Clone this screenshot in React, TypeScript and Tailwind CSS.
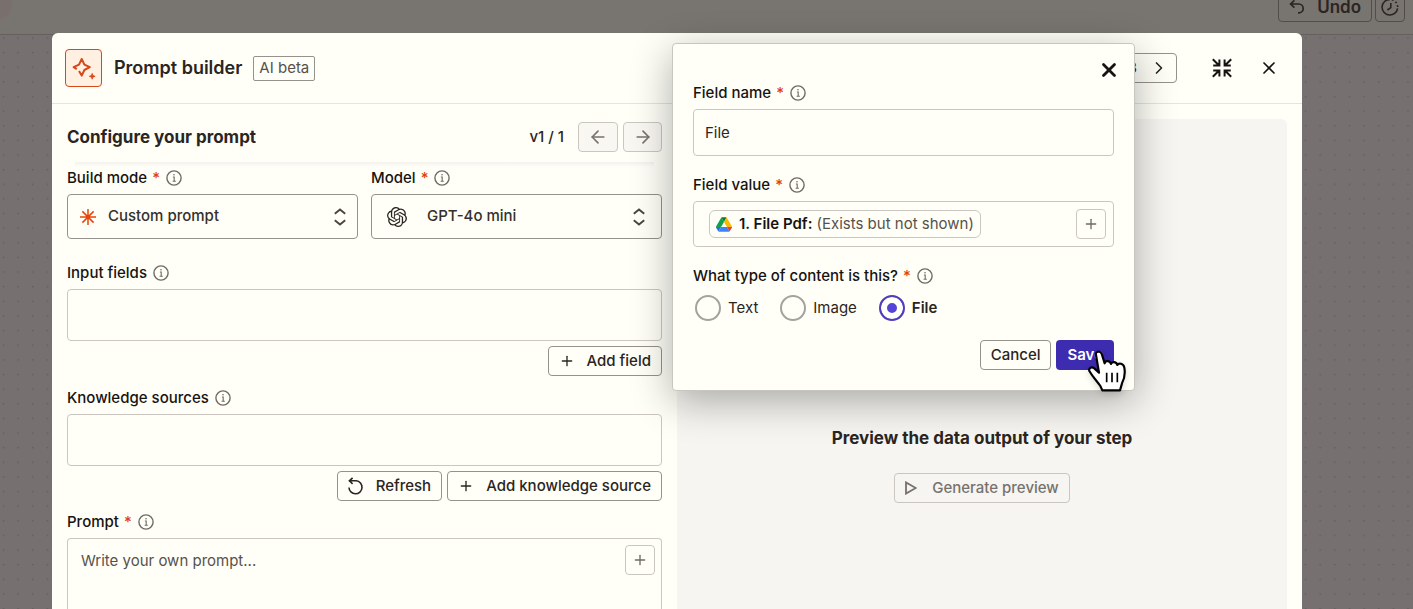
import { useState } from 'react';
import type { ReactNode } from 'react';
import { ArrowLeft, ArrowRight, ChevronRight, Plus, X } from 'lucide-react';
import { SiOpenai } from 'react-icons/si';

const contentTypes = ['Text', 'Image', 'File'];

function InfoIcon() {
  return (
    <svg className="w-4 h-4 text-[#6f6a64]" viewBox="0 0 16 16" fill="none" stroke="currentColor">
      <circle cx="8" cy="8" r="7.1" strokeWidth="1.4" />
      <path d="M6.9 7h1.3v4.2M6.6 11.3h3.2" strokeWidth="1.1" />
      <circle cx="8" cy="4.8" r="0.8" fill="currentColor" stroke="none" />
    </svg>
  );
}

function SparkleIcon() {
  return (
    <svg className="w-6 h-6 text-[#d4481a]" viewBox="0 0 24 24" fill="none" stroke="currentColor" strokeWidth="2">
      <path
        d="M4.8 13.1 1.6 11.2 7 8.6 9.7 3 12.4 8.6 17.8 11.2 12.4 14 9.7 19.6 7 15"
        strokeLinejoin="round"
      />
      <path
        d="M20.2 17.4l.8 2.1 2.1.8-2.1.8-.8 2.1-.8-2.1-2.1-.8 2.1-.8z"
        fill="currentColor"
        strokeWidth="0.8"
      />
    </svg>
  );
}

function StarburstIcon() {
  return (
    <svg className="w-4 h-4 text-[#e8440a]" viewBox="0 0 16 16" stroke="currentColor" strokeWidth="1.5">
      <path d="M8 0v16M0 8h16M2.4 2.4l11.2 11.2M13.6 2.4 2.4 13.6" />
      <circle cx="8" cy="8" r="2.2" fill="currentColor" stroke="none" />
    </svg>
  );
}

function UpDownIcon() {
  return (
    <svg className="w-3 h-5 text-[#4a4541]" viewBox="0 0 12 20" fill="none" stroke="currentColor" strokeWidth="1.9">
      <path d="M.8 6.8 6 2.4l5.2 4.4M.8 13.2 6 17.6l5.2-4.4" />
    </svg>
  );
}

function CollapseIcon() {
  return (
    <svg className="w-5 h-5" viewBox="0 0 20 20" fill="none" stroke="currentColor" strokeWidth="2">
      <path d="M.8 1.2l6 6M7.4 1.6v6H1.2M19.2 1.2l-6 6M12.6 1.6v6h6.2M.8 18.8l6-6M7.4 18.4v-6H1.2M19.2 18.8l-6-6M12.6 18.4v-6h6.2" />
    </svg>
  );
}

function UndoIcon() {
  return (
    <svg className="w-4 h-4" viewBox="0 0 16 16" fill="none" stroke="currentColor" strokeWidth="1.7">
      <path d="M5.4 1.4 1.6 5l3.8 3.6M1.6 5h8.2a4.3 4.3 0 0 1 0 8.8H9" />
    </svg>
  );
}

function ClockIcon() {
  return (
    <svg className="w-[18px] h-[18px]" viewBox="0 0 18 18" fill="none" stroke="currentColor" strokeWidth="1.6">
      <path d="M9 1.4a7.8 7.8 0 1 0 7.6 9" />
      <path d="M9 1.4a7.8 7.8 0 0 1 7.6 9" strokeDasharray="1.8 2.2" strokeDashoffset="-2" />
      <path d="M9.8 5v4.6L6.4 12" />
    </svg>
  );
}

function RefreshIcon() {
  return (
    <svg className="w-4 h-[18px]" viewBox="0 0 16 18" fill="none" stroke="currentColor" strokeWidth="1.6">
      <path d="M4.6.8 1.4 3.8l3.2 3M1.6 3.8h6.6a6.5 6.5 0 1 1-7.2 6.6" />
    </svg>
  );
}

function PlayIcon() {
  return (
    <svg className="w-3 h-[14px]" viewBox="0 0 12 14" fill="none" stroke="currentColor" strokeWidth="1.8">
      <path d="M1 1.4v11.2L10.8 7z" />
    </svg>
  );
}

function DriveIcon() {
  return (
    <svg className="w-4 h-[15px]" viewBox="0 0 87.3 78">
      <path d="m6.6 66.85 3.85 6.65c.8 1.4 1.95 2.5 3.3 3.3l13.75-23.8h-27.5c0 1.55.4 3.1 1.2 4.5z" fill="#2b6fe0" />
      <path d="m43.65 25-13.75-23.8c-1.35.8-2.5 1.9-3.3 3.3l-25.4 44a9.06 9.06 0 0 0 -1.2 4.5h27.5z" fill="#12a04a" />
      <path d="m73.55 76.8c1.35-.8 2.5-1.9 3.3-3.3l1.6-2.75 7.65-13.25c.8-1.4 1.2-2.95 1.2-4.5h-27.5l5.85 11.5z" fill="#ea4335" />
      <path d="m43.65 25 13.75-23.8c-1.35-.8-2.9-1.2-4.5-1.2h-18.5c-1.6 0-3.15.45-4.5 1.2z" fill="#0a7a34" />
      <path d="m59.8 53h-32.3l-13.75 23.8c1.35.8 2.9 1.2 4.5 1.2h50.8c1.6 0 3.15-.45 4.5-1.2z" fill="#3d83f6" />
      <path d="m73.4 26.5-12.7-22c-.8-1.4-1.95-2.5-3.3-3.3l-13.75 23.8 16.15 28h27.45c0-1.55-.4-3.1-1.2-4.5z" fill="#fbb905" />
    </svg>
  );
}

function HandCursor() {
  return (
    <svg className="w-[42px] h-[44px] drop-shadow-md" viewBox="378 480 126 132">
      <path
        d="M408 495C405 484 420 481 425 491L434 520C435 511 450 511 453 522C456 513 470 515 472 525C476 517 491 521 493 533C496 550 494 565 486 580L480 601H427L421 588C411 573 399 562 388 543C385 534 395 529 403 535L417 548Z"
        fill="#fff"
        stroke="#000"
        strokeWidth="6.5"
        strokeLinejoin="round"
      />
      <path d="M440 548v29M456 548v29M472 548v29" stroke="#000" strokeWidth="5" />
    </svg>
  );
}

interface FieldLabelProps {
  children: ReactNode;
  htmlFor?: string;
  required?: boolean;
}

function FieldLabel({ children, htmlFor, required }: FieldLabelProps) {
  return (
    <div className="flex items-center mb-[5px] h-[22px] text-[15px] font-medium text-[#171311]">
      <label htmlFor={htmlFor}>{children}</label>
      {required && <span className="ml-[5px] text-[#e0400a]">*</span>}
      <span className="ml-[6px]">
        <InfoIcon />
      </span>
    </div>
  );
}

interface SelectFieldProps {
  id: string;
  label: string;
  value: string;
  icon: ReactNode;
  textClass: string;
  arrowClass: string;
}

function SelectField({ id, label, value, icon, textClass, arrowClass }: SelectFieldProps) {
  return (
    <div className="flex-1">
      <FieldLabel htmlFor={id} required>{label}</FieldLabel>
      <div className="relative">
        <span className="absolute inset-y-0 left-[13px] flex items-center pointer-events-none">{icon}</span>
        <select
          id={id}
          className={`w-full h-[45px] appearance-none rounded border border-[#95928e] bg-transparent text-[15px] font-medium text-[#35302d] ${textClass}`}
        >
          <option>{value}</option>
        </select>
        <span className={`absolute inset-y-0 flex items-center pointer-events-none ${arrowClass}`}>
          <UpDownIcon />
        </span>
      </div>
    </div>
  );
}

function OutlineButton({ icon, children }: { icon?: ReactNode; children: ReactNode }) {
  return (
    <button className="flex items-center gap-3 h-[30px] px-[10px] rounded border border-[#95928e] text-[15px] font-medium text-[#2b2522]">
      {icon}
      {children}
    </button>
  );
}

function AddButton({ label }: { label: string }) {
  return (
    <button
      aria-label={label}
      className="flex items-center justify-center w-[30px] h-[30px] rounded border border-[#cbc7c0] text-[#6f6a64]"
    >
      <Plus className="w-4 h-4" strokeWidth={2} />
    </button>
  );
}

function FieldPopover() {
  const [fieldName, setFieldName] = useState('File');
  const [contentType, setContentType] = useState('File');

  return (
    <div
      role="dialog"
      aria-label="Field"
      className="absolute left-[620px] top-[10px] w-[463px] px-5 pt-[15px] pb-5 rounded border border-[#c9c6c0] bg-[#fffff8] shadow-[0_10px_40px_rgba(0,0,0,0.32)]"
    >
      <div className="flex justify-end h-[23px]">
        <button aria-label="Close field" className="h-[22px] -mr-[6px] text-[#171311]">
          <X className="w-[22px] h-[22px]" strokeWidth={3} />
        </button>
      </div>

      <FieldLabel htmlFor="field-name" required>Field name</FieldLabel>
      <input
        id="field-name"
        value={fieldName}
        onChange={(e) => setFieldName(e.target.value)}
        className="block w-full h-[47px] px-[11px] mb-[18px] rounded border border-[#cbc7c0] bg-transparent text-[15px] text-[#2b2522]"
      />

      <FieldLabel required>Field value</FieldLabel>
      <div className="flex items-center justify-between h-[46px] pl-[15px] pr-[7px] mb-[18px] rounded border border-[#cbc7c0]">
        <div className="flex items-center h-7 px-[6px] rounded-md border border-[#cbc7c0] text-[15px]">
          <DriveIcon />
          <span className="ml-[7px] font-semibold text-[#171311]">1. File Pdf:</span>
          <span className="ml-1 text-[#57514c]">(Exists but not shown)</span>
        </div>
        <AddButton label="Insert value" />
      </div>

      <FieldLabel required>What type of content is this?</FieldLabel>
      <div className="flex items-center gap-[22px] mt-2 pl-[2px] mb-[19px]">
        {contentTypes.map((type) => (
          <label
            key={type}
            className={`flex items-center gap-[7px] text-[15px] text-[#2b2522] ${type === contentType ? 'font-semibold' : ''}`}
          >
            <input
              type="radio"
              name="content-type"
              checked={type === contentType}
              onChange={() => setContentType(type)}
              className="w-[26px] h-[26px] appearance-none rounded-full border-2 border-[#a5a29e] checked:border-[#503ebd] checked:bg-[#5544d8] checked:shadow-[inset_0_0_0_6px_#fffff8]"
            />
            {type}
          </label>
        ))}
      </div>

      <div className="flex justify-end gap-[5px]">
        <OutlineButton>Cancel</OutlineButton>
        <div className="relative">
          <button className="h-[30px] px-[11px] rounded bg-[#3d2bb0] text-[15px] font-semibold text-white">Save</button>
          <span className="absolute left-[30px] top-[10px] pointer-events-none">
            <HandCursor />
          </span>
        </div>
      </div>
    </div>
  );
}

function ConfigurePanel() {
  return (
    <section className="flex flex-col px-[15px] pt-[18px]">
      <div className="flex items-center">
        <h2 className="flex-1 text-[17px] leading-7 font-bold text-[#2b2522]">Configure your prompt</h2>
        <span className="mr-[14px] text-[15px] font-medium text-[#2b2522]">v1 / 1</span>
        <button aria-label="Previous version" className="flex items-center justify-center w-10 h-[30px] mr-[5px] rounded border border-[#cbc7c0] bg-[#f8f7f2] text-[#77726d]">
          <ArrowLeft className="w-5 h-5" />
        </button>
        <button aria-label="Next version" className="flex items-center justify-center w-[39px] h-[30px] rounded border border-[#cbc7c0] bg-[#f8f7f2] text-[#77726d]">
          <ArrowRight className="w-5 h-5" />
        </button>
      </div>
      <div className="h-[5px] mt-[10px] mx-2 bg-linear-to-b from-[#f3f2ed] to-[#fffff8]" />

      <div className="flex gap-[13px] mb-[23px]">
        <SelectField
          id="build-mode"
          label="Build mode"
          value="Custom prompt"
          icon={<StarburstIcon />}
          textClass="pl-10"
          arrowClass="right-3"
        />
        <SelectField
          id="model"
          label="Model"
          value="GPT-4o mini"
          icon={<SiOpenai className="w-5 h-5 ml-[3px] text-[#2b2522]" />}
          textClass="pl-[55px]"
          arrowClass="right-[17px]"
        />
      </div>

      <FieldLabel>Input fields</FieldLabel>
      <div className="h-[52px] rounded border border-[#cbc7c0]" />
      <div className="flex justify-end mt-[5px] mb-[11px]">
        <OutlineButton icon={<Plus className="w-4 h-4" />}>Add field</OutlineButton>
      </div>

      <FieldLabel>Knowledge sources</FieldLabel>
      <div className="h-[52px] rounded border border-[#cbc7c0]" />
      <div className="flex justify-end gap-[5px] mt-[5px] mb-[10px]">
        <OutlineButton icon={<RefreshIcon />}>Refresh</OutlineButton>
        <OutlineButton icon={<Plus className="w-4 h-4" />}>Add knowledge source</OutlineButton>
      </div>

      <FieldLabel htmlFor="prompt" required>Prompt</FieldLabel>
      <div className="flex items-start flex-1 p-[6px] rounded-t border border-b-0 border-[#cbc7c0]">
        <textarea
          id="prompt"
          placeholder="Write your own prompt..."
          className="flex-1 h-full resize-none pl-[7px] pt-[5px] text-[15px] text-[#2b2522] placeholder:text-[#57514c]"
        />
        <AddButton label="Insert into prompt" />
      </div>
    </section>
  );
}

function PreviewPanel() {
  return (
    <section className="flex pt-[15px] pr-[15px]">
      <div className="flex flex-col items-center flex-1 pt-[305px] rounded-t-md bg-[#f6f5f1]">
        <h2 className="text-[17px] leading-7 font-bold text-[#2b2522]">Preview the data output of your step</h2>
        <button className="flex items-center gap-[15px] h-[30px] mt-[21px] px-[10px] rounded border border-[#cbc7c0] text-[15px] font-medium text-[#77726d]">
          <PlayIcon />
          Generate preview
        </button>
      </div>
    </section>
  );
}

function PromptBuilder() {
  return (
    <main className="relative flex flex-col flex-1 rounded-t-md bg-[#fffff8]">
      <header className="flex items-center h-[71px] pl-[13px] pr-[23px] border-b border-[#e6e4de]">
        <div className="flex items-center justify-center w-[37px] h-[38px] rounded border border-[#d4481a] bg-[#fff0e2]">
          <SparkleIcon />
        </div>
        <h1 className="ml-3 text-lg font-semibold text-[#2b2522]">Prompt builder</h1>
        <span className="flex items-center h-[25px] ml-[11px] px-[5px] rounded-xs border border-[#95928e] text-[15px] text-[#57514c]">
          AI beta
        </span>
        <button className="flex items-center gap-3 h-[30px] ml-auto px-[7px] rounded border border-[#95928e] text-[15px] font-medium text-[#2b2522]">
          3
          <ChevronRight className="w-5 h-5" />
        </button>
        <button aria-label="Collapse" className="ml-[35px] text-[#171311]">
          <CollapseIcon />
        </button>
        <button aria-label="Close" className="ml-[27px] text-[#171311]">
          <X className="w-5 h-5" />
        </button>
      </header>
      <div className="grid grid-cols-2 flex-1">
        <ConfigurePanel />
        <PreviewPanel />
      </div>
      <FieldPopover />
    </main>
  );
}

export default function App() {
  return (
    <div className="relative h-screen overflow-hidden bg-[#767070] font-['Inter',sans-serif]">
      <svg className="absolute inset-0 w-full h-full" aria-hidden="true">
        <pattern id="dots" x="-4" y="30.5" width="14.63" height="14.63" patternUnits="userSpaceOnUse">
          <circle cx="7.5" cy="7.5" r="0.9" fill="#656060" />
        </pattern>
        <rect width="100%" height="100%" fill="url(#dots)" />
      </svg>

      {/* Editor toolbar behind the dialog */}
      <div className="relative flex items-end justify-end gap-[3px] h-[35px] pr-2 pb-3 overflow-hidden border-b border-[#65605d] bg-[#787470] text-[#2b2522]">
        <span className="absolute -left-6 -top-3 w-9 h-8 rounded-full bg-[#796f6c]" />
        <button className="flex items-center gap-3 h-[30px] px-[10px] shrink-0 rounded border border-[#524d4a] text-[17px] leading-7 font-semibold">
          <UndoIcon />
          Undo
        </button>
        <button aria-label="History" className="flex items-center justify-center w-[30px] h-[30px] rounded border border-[#524d4a]">
          <ClockIcon />
        </button>
      </div>

      <div className="absolute inset-0 flex pl-[52px] pr-[111px] pt-[33px]">
        <PromptBuilder />
      </div>
    </div>
  );
}
